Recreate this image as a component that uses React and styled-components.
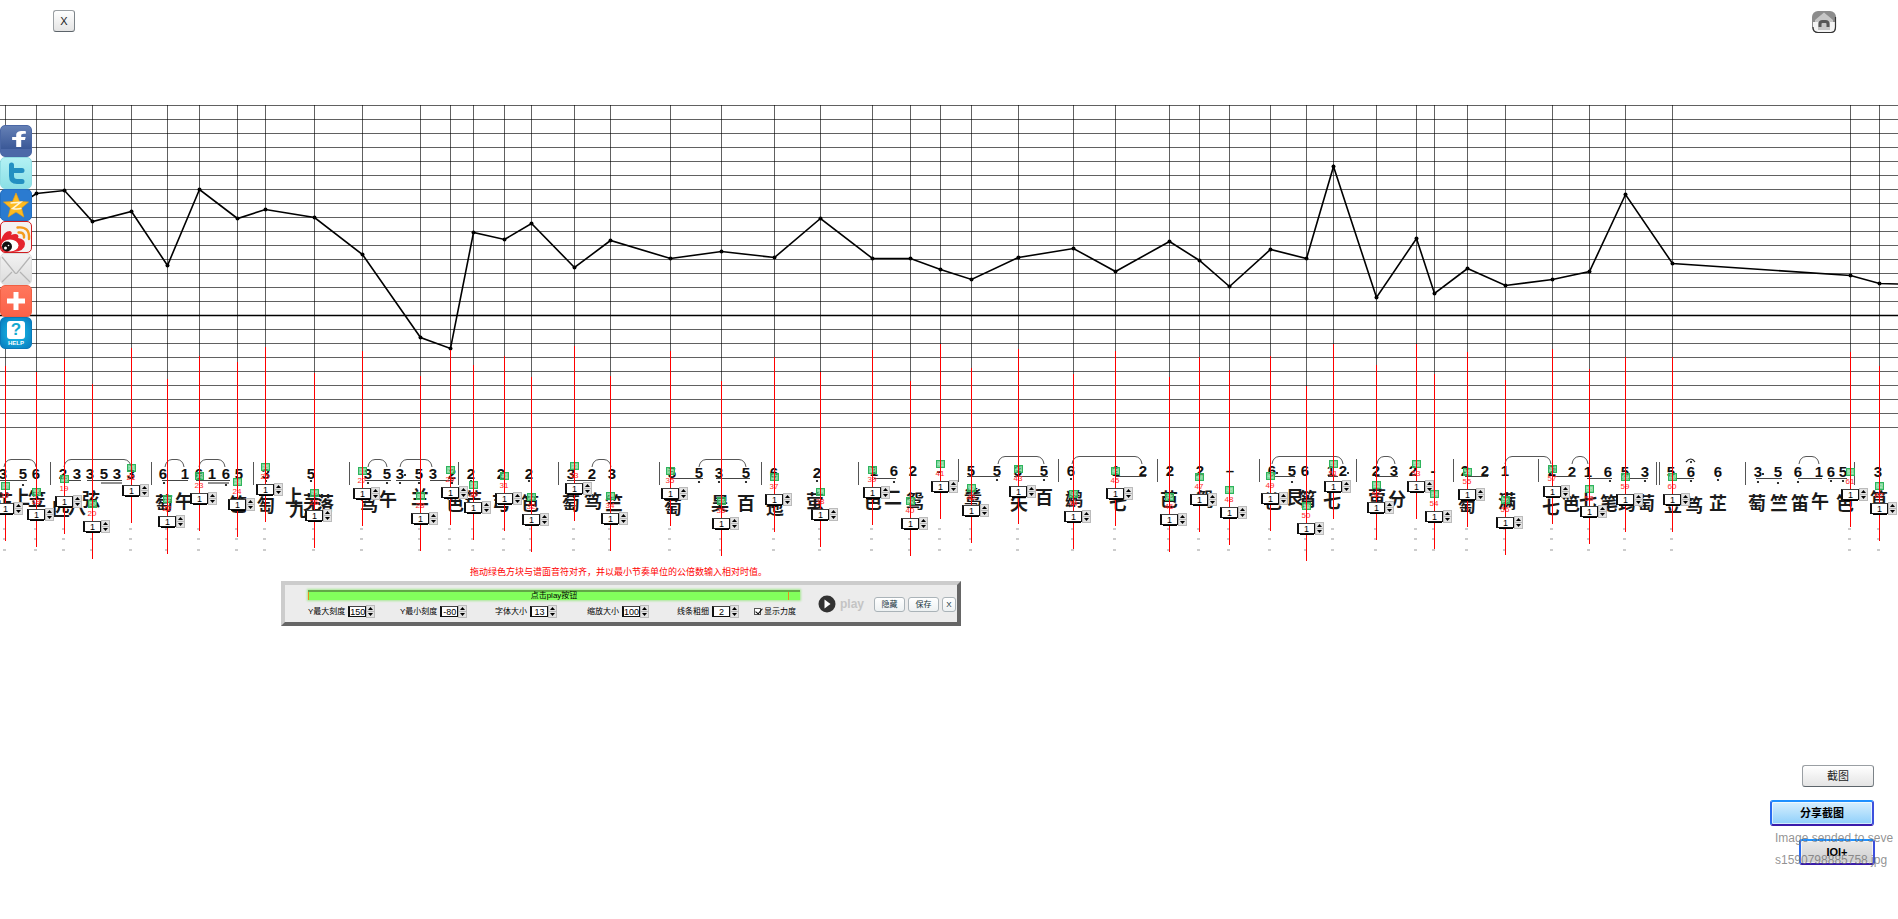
import styled, { createGlobalStyle, css } from "styled-components"
import { FaFacebookF } from "react-icons/fa"


const GlobalStyle = createGlobalStyle`
    * {
        box-sizing: border-box;
    }

    body {
        margin: 0;
        background-color: #fff;
        color: #000;
        font-family: "Liberation Sans", "Noto Sans CJK SC", sans-serif;
        overflow-x: hidden;
    }

    button, input {
        margin: 0;
        padding: 0;
        font-family: inherit;
        color: inherit;
    }
`

/* ---------- data ---------- */

// x of the note, y on the melody line, lowest point of its guide
const NOTES = [
    [5, 108, 436], [36, 88, 442], [64, 85, 429], [92, 116, 454], [131, 106, 418],
    [167, 160, 449], [199, 84, 426], [237, 113, 432], [265, 104, 417], [314, 112, 443],
    [362, 149, 421], [420, 232, 446], [450, 243, 420], [473, 127, 435], [504, 134, 426],
    [531, 118, 447], [574, 162, 416], [610, 135, 446], [670, 153, 421], [721, 146, 451],
    [774, 152, 427], [820, 113, 442], [872, 153, 420], [910, 153, 451], [940, 164, 414],
    [971, 174, 438], [1018, 152, 419], [1073, 143, 444], [1115, 166, 421], [1169, 136, 447],
    [1199, 155, 427], [1229, 181, 440], [1270, 144, 426], [1306, 153, 456], [1333, 61, 414],
    [1376, 192, 435], [1416, 133, 414], [1434, 188, 444], [1467, 163, 422], [1505, 180, 450],
    [1552, 174, 419], [1589, 166, 439], [1625, 89, 427], [1672, 158, 427], [1850, 170, 422],
    [1879, 178, 436],
]

const DIGITS = [
    [368, [[3, "3"], [23, "5"], [36, "6"], [63, "2"], [77, "3"], [90, "3"], [104, "5"], [117, "3"], [131, "3"],
        [163, "6"], [185, "1"], [199, "6"], [212, "1"], [226, "6"], [239, "5"], [266, "3"], [311, "5"],
        [368, "3"], [387, "5"], [400, "3"], [419, "5"], [433, "3"], [452, "2"], [471, "2"], [501, "2"],
        [529, "2"], [571, "3"], [592, "2"], [612, "3"]]],
    [367, [[672, "5"], [699, "5"], [719, "3"], [746, "5"], [774, "6"], [817, "2"]]],
    [365, [[874, "1"], [894, "6"], [913, "2"], [939, "-"], [971, "5"], [997, "5"], [1018, "3"], [1044, "5"],
        [1071, "6"], [1116, "1"], [1143, "2"], [1170, "2"], [1200, "2"], [1230, "–"], [1272, "6"], [1292, "5"],
        [1305, "6"], [1331, "1"], [1343, "2"], [1376, "2"], [1394, "3"], [1413, "2"], [1433, "-"],
        [1465, "2"], [1485, "2"], [1505, "1"], [1552, "2"]]],
    [366, [[1572, "2"], [1588, "1"], [1608, "6"], [1625, "5"], [1645, "3"], [1671, "5"], [1691, "6"],
        [1718, "6"], [1758, "3"], [1778, "5"], [1798, "6"], [1819, "1"], [1831, "6"], [1843, "5"], [1878, "3"]]],
]

const BARS = [50, 151, 253, 349, 458, 558, 659, 761, 858, 958, 1058, 1157, 1259, 1356, 1453, 1538, 1656, 1659, 1745, 1854]

const SLURS = [
    [4, 36], [64, 131], [165, 184], [199, 225], [368, 387], [400, 432], [592, 611], [699, 746],
    [998, 1044], [1072, 1142], [1272, 1343], [1377, 1395], [1505, 1551], [1572, 1588], [1799, 1819],
]

const BEAMS = [
    [0, 27], [64, 81], [87, 122], [162, 188], [196, 230], [365, 391], [396, 421], [430, 453], [567, 595],
    [670, 703], [716, 750], [874, 896], [967, 1000], [1014, 1048], [1115, 1146], [1270, 1295], [1328, 1338],
    [1375, 1398], [1465, 1488], [1552, 1575], [1587, 1612], [1622, 1648], [1670, 1694], [1756, 1782],
    [1798, 1822], [1828, 1847],
]

const DOTS = [
    [23, 380], [164, 378], [226, 380], [266, 376], [311, 376], [368, 378], [387, 378], [400, 378], [419, 378],
    [452, 378], [405, 370], [471, 376], [529, 376], [699, 377], [719, 377], [746, 377], [817, 376], [894, 377],
    [997, 375], [1044, 375], [1071, 374], [1277, 368], [1292, 377], [1348, 368], [1610, 376], [1645, 376],
    [1691, 376], [1718, 375], [1763, 369], [1758, 377], [1778, 378], [1798, 377], [1831, 376], [1843, 376],
]

const FINGERINGS = [
    [4, "芷", 400], [21, "上", 396], [37, "笠", 398], [61, "匹", 408], [77, "八", 406], [91, "弦", 398],
    [164, "萄", 402], [184, "午", 400], [238, "笆", 403], [266, "匋", 404], [294, "上", 395], [298, "九", 408],
    [312, "芜", 401], [325, "落", 402], [369, "笃", 403], [388, "午", 398], [420, "兰", 396], [455, "笆", 402],
    [473, "芒", 398], [501, "芎", 402], [530, "笆", 402], [571, "萄", 402], [593, "笃", 400], [614, "竺", 402],
    [673, "萄", 406], [720, "昊", 402], [746, "百", 402], [775, "迤", 406], [815, "萤", 400], [873, "芭", 400],
    [893, "二", 396], [915, "鸳", 400], [973, "鸶", 396], [1019, "矢", 402], [1044, "百", 396], [1074, "鹚", 398],
    [1118, "七", 402], [1169, "芭", 398], [1205, "鸳", 398], [1273, "笆", 400], [1295, "艮", 396], [1308, "筲", 398],
    [1332, "七", 400], [1377, "萤", 396], [1397, "分", 398], [1467, "萄", 404], [1507, "满", 400], [1551, "七", 406],
    [1571, "笆", 402], [1588, "七", 400], [1609, "笔", 402], [1627, "筠", 402], [1646, "萄", 402], [1673, "笠", 404],
    [1694, "笃", 404], [1718, "芷", 402], [1757, "萄", 402], [1779, "竺", 402], [1800, "笛", 402], [1820, "午", 400],
    [1845, "笆", 402], [1879, "笪", 398],
]

const SETTINGS = [
    ["Y最大刻度", "150"], ["Y最小刻度", "-80"], ["字体大小", "13"], ["缩放大小", "100"], ["线条粗细", "2"],
]

/* ---------- header ---------- */

const StyledHeader = styled.header`
    height: 105px;
    padding: 10px 61px 0 53px;
    display: flex;
    align-items: flex-start;
    justify-content: space-between;
`

const StyledButton = styled.button`
    width: ${({ $width }) => $width}px;
    height: 22px;
    border: 1px solid #9a9fa3;
    border-bottom-color: #5c646a;
    border-right-color: #7c8388;
    border-radius: 3px;
    background-image: linear-gradient(#fff, #e4e4e4);
    font-size: 11px;
    line-height: 20px;
    color: #222;
`

const StyledHome = styled.a`
    width: 26px;
    height: 24px;
`

function HomeIcon() {
    return (
        <svg width="26" height="24" viewBox="0 0 26 24">
            <rect x="1" y="1" width="24" height="22" rx="6" fill="#8c8c8c" />
            <path d="M2 12v5q0 5 5 5h13q4 0 4-5v-5z" fill="#f4f4f4" />
            <path d="M2 17q0 5.500 5 5.500h13q4.500 0 4.500-5.500V7" fill="none" stroke="#333" strokeWidth="1.200" />
            <path d="M13 2.500 4 10v2h3v8h12v-8h3v-2z" fill="#c6c6c6" />
            <path d="M9 17v-3q0-2.500 2.500-2.500h3q2.500 0 2.500 2.500v3" fill="none" stroke="#555" strokeWidth="3" />
        </svg>
    )
}

/* ---------- share bar ---------- */

const StyledShare = styled.nav`
    position: absolute;
    top: 125px;
    left: 0;
    display: flex;
    flex-direction: column;
    z-index: 5;
`

const StyledShareLink = styled.a`
    width: 32px;
    height: 32px;
    border-radius: 5px;
    border: 1px solid ${({ $edge }) => $edge};
    background: ${({ $fill }) => $fill};
    overflow: hidden;
    display: flex;
    flex-direction: column;
    align-items: center;
    justify-content: center;
    color: #fff;
    text-decoration: none;
`

const StyledHelp = styled.span`
    font: bold 6px/6px "Liberation Sans", sans-serif;
`

const StyledQuestion = styled.span`
    width: 18px;
    height: 18px;
    margin-bottom: 1px;
    border-radius: 3px;
    background-color: #fff;
    color: #13a9cf;
    font: bold 17px/18px "Liberation Sans", sans-serif;
    text-align: center;
`

function ShareBar() {
    return (
        <StyledShare aria-label="Share">
            <StyledShareLink href="#facebook" aria-label="Facebook" $edge="#4a67a5" $fill="linear-gradient(#6580b5, #3b5998 75%, #4c69a8 76%)">
                <svg width="30" height="30" viewBox="0 0 30 30">
                    <FaFacebookF x="10" y="5" width="20" height="26" preserveAspectRatio="none" />
                </svg>
            </StyledShareLink>
            <StyledShareLink href="#twitter" aria-label="Twitter" $edge="#8fdde4" $fill="linear-gradient(#b3f1f4, #8be0e6)">
                <svg width="30" height="30" viewBox="0 0 30 30">
                    <path d="M10.500 7v11q0 5.500 5.500 5.500h5M11 12.500h10" fill="none" stroke="#2390c2" strokeWidth="5" strokeLinecap="round" />
                </svg>
            </StyledShareLink>
            <StyledShareLink href="#qzone" aria-label="Qzone" $edge="#236fc0" $fill="#2b7bd0">
                <svg width="30" height="30" viewBox="0 0 30 30">
                    <path d="m15 3 3.500 8.500 9 .5-7 6 2.300 9L15 22l-7.800 5 2.300-9-7-6 9-.5z" fill="#fdbb21" stroke="#e99f16" strokeWidth=".7" />
                    <path d="m9.500 13 10-.7-8 6.200q5 1.200 9-.2" fill="none" stroke="#fff6d8" strokeWidth="1.600" />
                </svg>
            </StyledShareLink>
            <StyledShareLink href="#weibo" aria-label="Weibo" $edge="#cf1d20" $fill="#f4f2f2">
                <svg width="30" height="30" viewBox="0 0 30 30">
                    <path d="M0 18Q3 9 9 9q3 1 1 4 5-2 7 0 1 2 0 3 7 1 7 6 0 7-12 8H0z" fill="#e5232d" />
                    <ellipse cx="9" cy="23.500" rx="8.500" ry="6" fill="#fff" />
                    <circle cx="6" cy="24.500" r="5" fill="#111" />
                    <circle cx="4.500" cy="26" r="1.500" fill="#fff" />
                    <circle cx="7.500" cy="23.500" r=".8" fill="#fff" />
                    <path d="M16.500 5.500Q29 4 28 17M17.500 10.500q6-.5 5.500 5" fill="none" stroke="#f39a1e" strokeWidth="2.400" strokeLinecap="round" />
                </svg>
            </StyledShareLink>
            <StyledShareLink href="#mail" aria-label="Mail" $edge="#ddd" $fill="linear-gradient(#f2f2f2, #dcdcdc)">
                <svg width="30" height="30" viewBox="0 0 30 30">
                    <path d="m1 3 13 16q1 1 2 0L29 3M1 28l10-10M29 28 19 18" fill="none" stroke="#b4b4b4" strokeWidth="1.200" />
                </svg>
            </StyledShareLink>
            <StyledShareLink href="#more" aria-label="More" $edge="#f05f43" $fill="linear-gradient(#ff775d, #fb6148)">
                <svg width="30" height="30" viewBox="0 0 30 30">
                    <path d="M15 6v18M6 15h18" stroke="#fff" strokeWidth="5" />
                </svg>
            </StyledShareLink>
            <StyledShareLink href="#help" $edge="#0a78b8" $fill="radial-gradient(#19c5ee, #0879bd)">
                <StyledQuestion>?</StyledQuestion>
                <StyledHelp>HELP</StyledHelp>
            </StyledShareLink>
        </StyledShare>
    )
}

/* ---------- stepper ---------- */

const StyledStepper = styled.span`
    display: flex;
    align-items: center;
    position: relative;

    ${({ $shadow }) => $shadow && css`
        &::after {
            content: "";
            position: absolute;
            left: 3px;
            bottom: 0;
            width: 14px;
            height: 1px;
            background-color: #000;
        }
    `}
`

const StyledValue = styled.input`
    width: 18px;
    height: 11px;
    border: solid #111;
    border-width: 1px 1px 1px 2px;
    border-top-color: #444;
    border-radius: 0;
    background-color: #fff;
    font-size: ${({ $size }) => $size}px;
    line-height: 9px;
    text-align: center;
    outline: none;
`

const StyledArrows = styled.span`
    width: 9px;
    display: flex;
    flex-direction: column;
`

const StyledArrow = styled.button`
    height: 7px;
    border: 1px solid #bbb;
    background-color: #e2e2e2;
    display: flex;
    align-items: center;
    justify-content: center;

    & + & {
        height: 6px;
        border-top: none;
    }
`

function Stepper({ value, label, id, shadow, size = 9 }) {
    return (
        <StyledStepper $shadow={shadow}>
            <StyledValue id={id} aria-label={label} defaultValue={value} $size={size} />
            <StyledArrows>
                <StyledArrow type="button" aria-label="Up">
                    <svg width="5" height="3" viewBox="0 0 5 3"><path d="M0 3h5L2.500 0z" /></svg>
                </StyledArrow>
                <StyledArrow type="button" aria-label="Down">
                    <svg width="5" height="3" viewBox="0 0 5 3"><path d="M0 0h5L2.500 3z" /></svg>
                </StyledArrow>
            </StyledArrows>
        </StyledStepper>
    )
}

/* ---------- stage: melody line, score and guides ---------- */

const StyledStage = styled.section`
    position: relative;
    height: 461px;
    overflow: hidden;
`

const StyledScore = styled.svg`
    display: block;
    width: 100%;
    height: 461px;
`

const StyledDigit = styled.text`
    font: bold 15px "Liberation Sans", sans-serif;
    text-anchor: middle;
    dominant-baseline: central;
    fill: #111;
`

const StyledFingering = styled.text`
    font: bold 18px "Noto Sans CJK SC", sans-serif;
    text-anchor: middle;
    fill: #1a1a1a;
`

const StyledGuide = styled.div`
    position: absolute;
    width: 27px;
    height: 175px;
    padding-top: 116px;

    &::before {
        content: "";
        position: absolute;
        top: 0;
        left: 9px;
        width: 1px;
        height: 100%;
        background-color: #f00;
    }
`

const StyledHandle = styled.div`
    width: 9px;
    height: 8px;
    margin-left: 5px;
    border: 1px solid #2eb45c;
    background-color: rgba(70, 195, 110, 0.7);
    color: #b8f0c6;
    font-size: 6px;
    line-height: 6px;
    text-align: center;
    display: flex;
    justify-content: center;
`

const StyledIndex = styled.div`
    width: 18px;
    height: 12px;
    color: #ff2a2a;
    font-size: 8px;
    line-height: 12px;
    text-align: center;
`

function Melody() {
    const line = [...NOTES.map(([x, y]) => `${x + 0.5},${y + 0.5}`), "1900,179"].join(" ")

    return (
        <g>
            <g stroke="#000" strokeOpacity=".62" shapeRendering="crispEdges">
                {Array.from({ length: 24 }, (_, i) => (
                    <line key={i} x1="0" x2="100%" y1={i * 14 + 0.5} y2={i * 14 + 0.5} />
                ))}
                {NOTES.map(([x]) => <line key={x} x1={x + 0.5} x2={x + 0.5} y1="0" y2="323" />)}
            </g>
            <line x1="0" x2="100%" y1="210.5" y2="210.5" stroke="#000" strokeWidth="1.500" />
            <polyline points={line} fill="none" stroke="#000" strokeWidth="1.600" />
            {NOTES.map(([x, y]) => <circle key={x} cx={x + 0.5} cy={y + 0.5} r="2" />)}
        </g>
    )
}

function Notation() {
    return (
        <g>
            {FINGERINGS.map(([x, char, y]) => <StyledFingering key={`${x}${char}`} x={x} y={y + 3}>{char}</StyledFingering>)}
            {DIGITS.map(([y, row]) => row.map(([x, digit]) => <StyledDigit key={x} x={x} y={y}>{digit}</StyledDigit>))}
            {BARS.map((x) => {
                const top = x > 860 && x < 1560 ? 354 : 357
                return <line key={x} x1={x + 0.5} x2={x + 0.5} y1={top} y2={top + 23} stroke="#555" />
            })}
            {SLURS.map(([from, to]) => {
                const top = from > 860 ? 351 : 354
                return (
                    <path
                        key={from}
                        d={`M${from} ${top + 8}q1-7 7-7.500H${to - 7}q6 .5 7 7.500`}
                        fill="none"
                        stroke="#444"
                        strokeWidth=".9"
                    />
                )
            })}
            {BEAMS.map(([from, to]) => {
                const y = from > 960 && from < 1560 ? 371.5 : from > 620 ? 373.5 : 375.5
                return <line key={from} x1={from} x2={to} y1={y} y2={y} stroke="#444" />
            })}
            <path d="M101 378h21M208 378h21" stroke="#222" />
            <path d="M1686 357q5-6 9 0" fill="none" stroke="#222" strokeWidth="1.200" />
            <circle cx="1691" cy="357" r="1" />
            {DOTS.map(([x, y]) => <circle key={`${x}-${y}`} cx={x} cy={y} r="1.100" />)}
            {NOTES.map(([x]) => <path key={x} d={`M${x - 2} 424h3m-3 10h3m-3 11h3`} stroke="#999" />)}
        </g>
    )
}

function Stage() {
    return (
        <StyledStage>
            <StyledScore>
                <Melody />
                <Notation />
            </StyledScore>
            {NOTES.map(([x, , bottom], i) => (
                <StyledGuide key={x} style={{ left: x - 9, top: bottom - 175 }}>
                    <StyledHandle>{i + 17}</StyledHandle>
                    <StyledIndex>{i + 17}</StyledIndex>
                    <Stepper value="1" label={`Note ${i + 17}`} shadow />
                </StyledGuide>
            ))}
        </StyledStage>
    )
}

/* ---------- player panel ---------- */

const StyledPlayer = styled.section`
    width: 680px;
    margin-left: 281px;
`

const StyledTip = styled.p`
    height: 15px;
    margin: 0;
    padding-left: 189px;
    color: #f00;
    font-size: 9px;
    line-height: 12px;
    white-space: nowrap;
`

const StyledPanel = styled.div`
    height: 45px;
    padding: 5px 1px 0 23px;
    border: 4px solid;
    border-color: #ccc #666 #666 #ccc;
    background-color: #ececec;
    display: flex;
`

const StyledControls = styled.div`
    width: 492px;
`

const StyledProgress = styled.div`
    position: relative;
    height: 10px;
    border-top: 2px solid #62a847;
    background-color: #82ff5c;
    box-shadow: 0 0 2px 1px #a9e896;
    font-size: 8px;
    line-height: 8px;
    text-align: center;

    &::before, &::after {
        content: "";
        position: absolute;
        top: 0;
        left: 0;
        width: 1px;
        height: 8px;
        background-color: #e8901c;
    }

    &::after {
        left: auto;
        right: 11px;
    }
`

const StyledSettings = styled.div`
    margin-top: 5px;
    display: grid;
    grid-template-columns: 92px 95px 92px 90px 77px auto;
    align-items: center;
`

const StyledSetting = styled.div`
    display: flex;
    align-items: center;
    gap: 3px;
    font-size: 8px;
    line-height: 12px;
    white-space: nowrap;
`

const StyledCheck = styled.input`
    appearance: none;
    position: relative;
    width: 7px;
    height: 7px;
    border: 1px solid #555;
    background-color: #fff;

    &:checked::after {
        content: "";
        position: absolute;
        top: -2px;
        left: 2px;
        width: 3px;
        height: 6px;
        border: solid #000;
        border-width: 0 1px 1px 0;
        transform: rotate(40deg);
    }
`

const StyledPlay = styled.button`
    width: 56px;
    height: 20px;
    margin: 4px 0 0 18px;
    border: none;
    background: none;
    display: flex;
    align-items: center;
    gap: 4px;
    color: #c4c4c4;
    font-size: 12px;
    font-weight: bold;
`

const StyledPanelActions = styled.div`
    height: 15px;
    margin-top: 7px;
    display: flex;
    gap: 3px;
`

const StyledSmallButton = styled.button`
    width: ${({ $width }) => $width}px;
    height: 15px;
    border: 1px solid #aab3b8;
    border-radius: 3px;
    background-image: linear-gradient(#fff, #edf1f2);
    color: #15333b;
    font-size: 8px;
    line-height: 12px;
`

function Player() {
    return (
        <StyledPlayer>
            <StyledTip>拖动绿色方块与谱面音符对齐，并以最小节奏单位的公倍数输入相对时值。</StyledTip>
            <StyledPanel>
                <StyledControls>
                    <StyledProgress>点击play按钮</StyledProgress>
                    <StyledSettings>
                        {SETTINGS.map(([label, value], i) => (
                            <StyledSetting key={label}>
                                <label htmlFor={`setting-${i}`}>{label}</label>
                                <Stepper id={`setting-${i}`} value={value} />
                            </StyledSetting>
                        ))}
                        <StyledSetting as="label">
                            <StyledCheck type="checkbox" defaultChecked />
                            显示力度
                        </StyledSetting>
                    </StyledSettings>
                </StyledControls>
                <StyledPlay type="button">
                    <svg width="18" height="18" viewBox="0 0 18 18">
                        <circle cx="9" cy="9" r="8.500" fill="#333" />
                        <path d="m6.500 4.500 6 4.500-6 4.500z" fill="#fff" />
                    </svg>
                    play
                </StyledPlay>
                <StyledPanelActions>
                    <StyledSmallButton type="button" $width={31}>隐藏</StyledSmallButton>
                    <StyledSmallButton type="button" $width={31}>保存</StyledSmallButton>
                    <StyledSmallButton type="button" $width={14}>X</StyledSmallButton>
                </StyledPanelActions>
            </StyledPanel>
        </StyledPlayer>
    )
}

/* ---------- screenshot actions ---------- */

const StyledCapture = styled.aside`
    margin-top: 139px;
    padding-right: 24px;
    display: flex;
    flex-direction: column;
    align-items: flex-end;
    gap: 13px;
`

const StyledBlueButton = styled.button`
    width: ${({ $width }) => $width}px;
    height: 26px;
    border: 2px solid;
    border-color: #1e90ff #3d50dd #3a1cab #2b6cf0;
    border-radius: 3px;
    background-image: ${({ $plain }) => $plain
        ? "linear-gradient(#e8e8e8, #cfcfcf)"
        : "linear-gradient(#d8effd, #8fd0fb)"};
    box-shadow: inset 0 0 0 1px rgba(255, 255, 255, 0.6);
    font-size: 11px;
    font-weight: bold;
    line-height: 20px;
`

const StyledMessage = styled.div`
    position: relative;
    width: 123px;
    margin: 1px 0 0 auto;
`

const StyledText = styled.p`
    position: relative;
    margin: 0;
    overflow: hidden;
    color: rgba(110, 110, 110, 0.75);
    font-size: 12px;
    line-height: 22px;
    white-space: nowrap;
    pointer-events: none;
`

const StyledOverlay = styled.div`
    position: absolute;
    top: 12px;
    left: 24px;
`

export default function App() {
    return (
        <>
            <GlobalStyle />
            <StyledHeader>
                <StyledButton type="button" $width={22}>X</StyledButton>
                <StyledHome href="#home" aria-label="Home"><HomeIcon /></StyledHome>
            </StyledHeader>
            <ShareBar />
            <main>
                <Stage />
                <Player />
                <StyledCapture>
                    <StyledButton type="button" $width={72}>截图</StyledButton>
                    <StyledBlueButton type="button" $width={104}>分享截图</StyledBlueButton>
                </StyledCapture>
                <StyledMessage>
                    <StyledOverlay>
                        <StyledBlueButton type="button" $width={76} $plain>IOI+</StyledBlueButton>
                    </StyledOverlay>
                    <StyledText>Image sended to seve</StyledText>
                    <StyledText>s1590798885758.jpg</StyledText>
                </StyledMessage>
            </main>
        </>
    )
}
